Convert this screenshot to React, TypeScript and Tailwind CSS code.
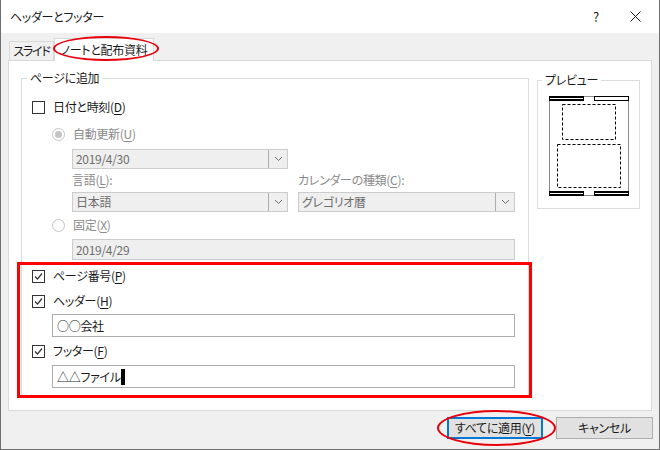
import React from "react"

const font = { fontFamily: '"Noto Sans CJK JP", "Noto Sans", sans-serif' }

function CheckBox({ checked }: { checked: boolean }) {
  return (
    <span className="w-[13px] h-[13px] border border-[#333333] bg-white flex items-center justify-center shrink-0">
      {checked && (
        <svg width="11" height="11" viewBox="0 0 11 11">
          <path d="M2 5.5 L4.5 8 L9 2.5" fill="none" stroke="#333333" strokeWidth="1.2" />
        </svg>
      )}
    </span>
  )
}

function Radio({ checked }: { checked: boolean }) {
  return (
    <span className="w-[13px] h-[13px] rounded-full border border-[#c4c4c4] bg-white flex items-center justify-center shrink-0">
      {checked && <span className="w-[7px] h-[7px] rounded-full bg-[#c4c4c4]" />}
    </span>
  )
}

function Label({ text, k, disabled }: { text: string; k: string; disabled?: boolean }) {
  return (
    <span className={disabled ? "text-[#8a8a8a]" : "text-[#1a1a1a]"}>
      {text}(<span className="underline underline-offset-2">{k}</span>)
    </span>
  )
}

function Select({ value, width }: { value: string; width: string }) {
  return (
    <div className={`${width} h-[20px] border border-[#cccccc] bg-[#efefef] flex items-stretch`}>
      <span className="flex-1 pl-[3px] text-[#6d6d6d] leading-[18px]">{value}</span>
      <span className="w-[19px] border-l border-[#adadad] flex items-center justify-center">
        <svg width="9" height="6" viewBox="0 0 9 6">
          <path d="M1 1 L4.5 4.5 L8 1" fill="none" stroke="#6d6d6d" strokeWidth="1" />
        </svg>
      </span>
    </div>
  )
}

export default function App() {
  return (
    <div
      className="relative w-[660px] h-[450px] border-x border-b border-[#6f6f6f] flex flex-col text-[12px] text-[#1a1a1a] bg-[#f0f0f0] [font-feature-settings:'palt'] tracking-[-0.3px]"
      style={font}
    >
      {/* title bar */}
      <div className="h-[33px] bg-white flex items-center pl-[9px] shrink-0">
        <span className="flex-1">ヘッダーとフッター</span>
        <span className="w-[20px] text-center text-[13px] mr-[24px]">?</span>
        <svg width="11" height="11" viewBox="0 0 11 11" className="mr-[18px]">
          <path d="M0.5 0.5 L10.5 10.5 M10.5 0.5 L0.5 10.5" stroke="#1a1a1a" strokeWidth="1" />
        </svg>
      </div>

      {/* tabs */}
      <div className="h-[27px] flex items-end pl-[8px] shrink-0 whitespace-nowrap">
        <div className="h-[19px] w-[45px] border border-b-0 border-[#d9d9d9] bg-[#f0f0f0] flex items-center justify-center tracking-[-1.2px]">
          スライド
        </div>
        <div className="relative z-10 -mb-px h-[23px] w-[100px] border border-b-0 border-[#d9d9d9] bg-white flex items-center justify-center">
          ノートと配布資料
        </div>
      </div>

      {/* panel */}
      <div className="mx-[7px] h-[351px] border border-[#d9d9d9] bg-white flex shrink-0">
        <fieldset className="ml-[12px] mt-[9px] w-[508px] h-[327px] border border-[#dcdcdc]">
          <legend className="ml-[5px] px-[3px] leading-[16px]">ページに追加</legend>
          <div className="flex flex-col">
            <div className="mt-[13px] ml-[10px] h-[16px] flex items-center gap-[8px]">
              <CheckBox checked={false} />
              <Label text="日付と時刻" k="D" />
            </div>
            <div className="mt-[11px] ml-[30px] h-[16px] flex items-center gap-[8px]">
              <Radio checked />
              <Label text="自動更新" k="U" disabled />
            </div>
            <div className="mt-[7px] ml-[50px]">
              <Select value="2019/4/30" width="w-[216px]" />
            </div>
            <div className="mt-[3px] ml-[50px] h-[16px] flex items-center gap-[10px] text-[#8a8a8a]">
              <span className="w-[216px]">
                言語(<span className="underline underline-offset-2">L</span>):
              </span>
              <span>
                カレンダーの種類(<span className="underline underline-offset-2">C</span>):
              </span>
            </div>
            <div className="mt-[4px] ml-[50px] flex gap-[10px]">
              <Select value="日本語" width="w-[216px]" />
              <Select value="グレゴリオ暦" width="w-[217px]" />
            </div>
            <div className="mt-[5px] ml-[30px] h-[16px] flex items-center gap-[8px]">
              <Radio checked={false} />
              <Label text="固定" k="X" disabled />
            </div>
            <div className="mt-[6px] ml-[50px] w-[443px] h-[21px] border border-[#cccccc] bg-[#efefef] pl-[3px] leading-[19px] text-[#6d6d6d]">
              2019/4/29
            </div>
            <div className="mt-[8px] ml-[10px] h-[16px] flex items-center gap-[8px]">
              <CheckBox checked />
              <Label text="ページ番号" k="P" />
            </div>
            <div className="mt-[9px] ml-[10px] h-[16px] flex items-center gap-[8px]">
              <CheckBox checked />
              <Label text="ヘッダー" k="H" />
            </div>
            <div className="mt-[5px] ml-[30px] w-[463px] h-[23px] border border-[#acacac] bg-white pl-[4px] leading-[21px]">
              ○○会社
            </div>
            <div className="mt-[6px] ml-[10px] h-[16px] flex items-center gap-[8px]">
              <CheckBox checked />
              <Label text="フッター" k="F" />
            </div>
            <div className="mt-[6px] ml-[30px] w-[463px] h-[23px] border border-[#acacac] bg-white pl-[4px] flex items-center">
              <span>△△ファイル</span>
              <span className="w-[4px] h-[16px] bg-black" />
            </div>
          </div>
        </fieldset>

        <fieldset className="ml-[8px] mt-[11px] w-[103px] h-[137px] border border-[#dcdcdc]">
          <legend className="ml-[4px] px-[3px] leading-[16px]">プレビュー</legend>
          <svg width="84" height="104" viewBox="0 0 84 104" className="ml-[9px] mt-[6px]">
            <rect x="2.5" y="2.5" width="79" height="99" fill="white" stroke="#8c8c8c" strokeWidth="1" />
            <rect x="2" y="2" width="35" height="5" fill="black" />
            <rect x="3" y="4" width="33" height="1" fill="white" />
            <rect x="47.5" y="2.5" width="34" height="4" fill="white" stroke="black" strokeWidth="1" />
            <rect x="2" y="97" width="35" height="5" fill="black" />
            <rect x="3" y="99" width="33" height="1" fill="white" />
            <rect x="47" y="97" width="35" height="5" fill="black" />
            <rect x="48" y="99" width="33" height="1" fill="white" />
            <rect x="15.5" y="10.5" width="53" height="35" fill="none" stroke="black" strokeWidth="1" strokeDasharray="3 2" />
            <rect x="10.5" y="50.5" width="63" height="43" fill="none" stroke="black" strokeWidth="1" strokeDasharray="3 2" />
          </svg>
        </fieldset>
      </div>

      {/* buttons */}
      <div className="mt-[6px] flex justify-end gap-[13px] pr-[6px]">
        <button className="w-[96px] h-[22px] border-2 border-[#0078d7] bg-[#e1e1e1] flex items-center justify-center">
          すべてに適用(<span className="underline underline-offset-2">Y</span>)
        </button>
        <button className="w-[97px] h-[22px] border border-[#adadad] bg-[#e1e1e1] flex items-center justify-center">
          キャンセル
        </button>
      </div>

      {/* red annotations */}
      <div className="absolute z-20 left-[52px] top-[36px] w-[106px] h-[25px] rounded-[50%] border-2 border-[#e8000b] pointer-events-none" />
      <div className="absolute z-20 left-[16px] top-[262px] w-[515px] h-[136px] border-[3px] border-[#ff0000] pointer-events-none" />
      <div className="absolute z-20 left-[436px] top-[410px] w-[119px] h-[36px] rounded-[50%] border-2 border-[#e8000b] pointer-events-none" />
    </div>
  )
}
